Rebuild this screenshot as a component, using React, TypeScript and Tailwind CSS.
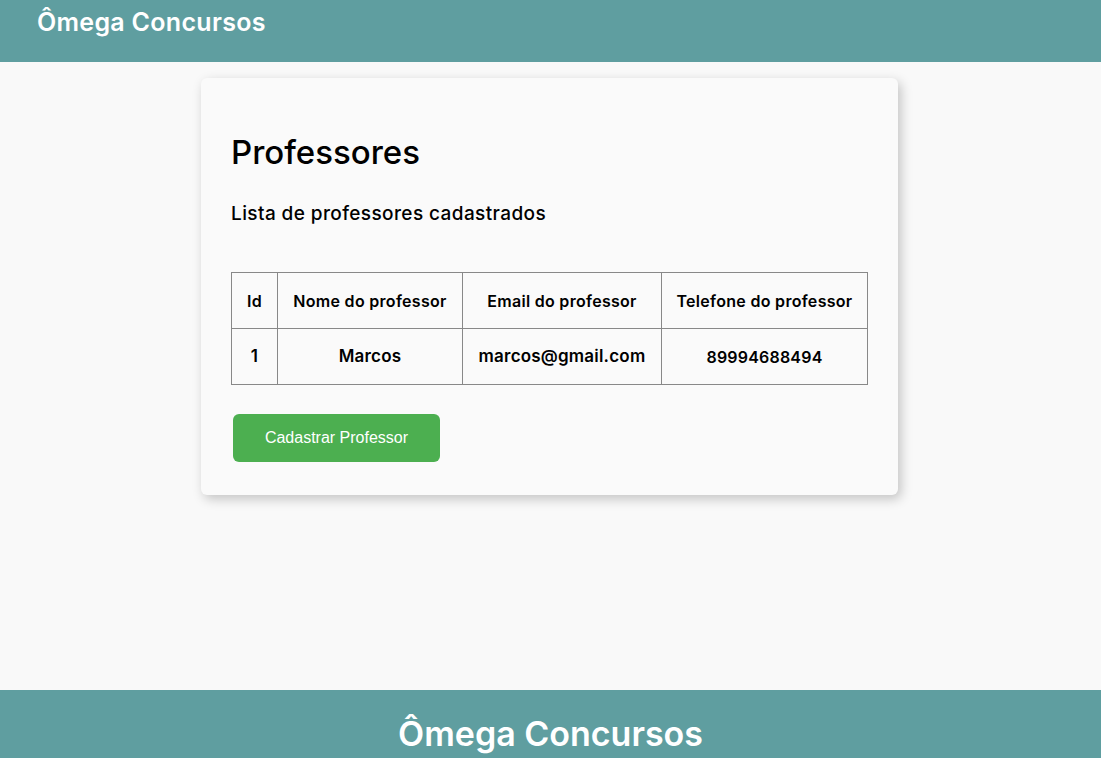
import React from "react";

const professores = [
  { id: 1, nome: "Marcos", email: "marcos@gmail.com", telefone: "89994688494" },
];

export default function App() {
  return (
    <div className="min-h-screen flex flex-col bg-[#f9f9f9] font-['Inter',sans-serif] text-black">
      {/* HEADER */}
      <header className="h-[62px] bg-[#5f9ea0] px-[37px] pt-[6px]">
        <h1 className="text-[25px] leading-[32px] font-semibold text-white tracking-[0.3px]">Ômega Concursos</h1>
      </header>

      {/* CONTENT */}
      <main className="flex-1 pt-[16px] pr-[2px]">
        <div className="mx-auto w-[697px] rounded-md bg-[#fafafa] px-[30px] pt-[52px] pb-[33px] shadow-[3px_4px_12px_rgba(0,0,0,0.22)]">
          <h2 className="text-[33px] leading-[44px] font-medium">Professores</h2>
          <h3 className="mt-[27px] text-[19px] leading-[26px] font-medium tracking-[0.4px]">Lista de professores cadastrados</h3>

          <table className="mt-[45px] w-[637px] table-fixed border-collapse text-center font-semibold">
            <thead>
              <tr className="h-[56px] text-[16px] tracking-[0.3px]">
                <th className="w-[46px] border border-[#888] font-semibold">Id</th>
                <th className="w-[185px] border border-[#888] font-semibold">Nome do professor</th>
                <th className="w-[199px] border border-[#888] font-semibold">Email do professor</th>
                <th className="border border-[#888] font-semibold">Telefone do professor</th>
              </tr>
            </thead>
            <tbody>
              {professores.map((p) => (
                <tr key={p.id} className="h-[56px] text-[17px] tracking-[0.2px]">
                  <td className="border border-[#888]">{p.id}</td>
                  <td className="border border-[#888]">{p.nome}</td>
                  <td className="border border-[#888]">{p.email}</td>
                  <td className="border border-[#888] text-[16px]">{p.telefone}</td>
                </tr>
              ))}
            </tbody>
          </table>

          <button className="mt-[29px] ml-[2px] h-[48px] w-[207px] rounded-md bg-[#4caf50] font-['Liberation_Sans',Arial,sans-serif] text-[16px] text-white">
            Cadastrar Professor
          </button>
        </div>
      </main>

      {/* FOOTER */}
      <footer className="h-[68px] bg-[#5f9ea0] pt-[20px] text-center">
        <p className="text-[34px] leading-[48px] font-semibold text-white">Ômega Concursos</p>
      </footer>
    </div>
  );
}
